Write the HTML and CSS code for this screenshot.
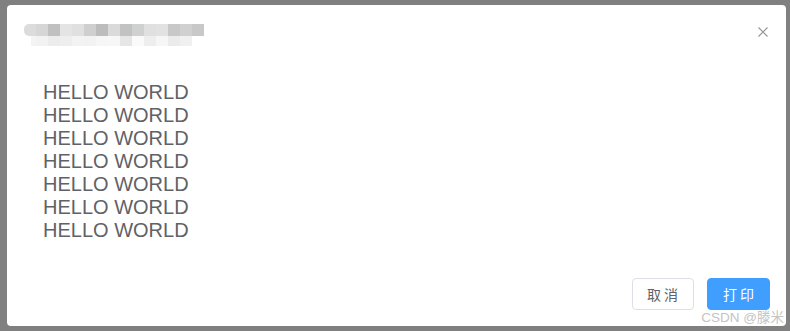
FILE: index.html
```html
<!DOCTYPE html>
<html lang="zh">
<head>
<meta charset="utf-8">
<title>Print dialog</title>
<link rel="stylesheet" href="styles.css">
</head>
<body>
<div class="overlay">
  <div class="dialog">
    <div class="dialog-header">
      <div class="title-blur" aria-label="title">
        <div class="row row-top">
          <span></span><span></span><span></span><span></span><span></span><span></span><span></span><span></span><span></span><span></span><span></span><span></span><span></span><span></span><span></span>
        </div>
        <div class="row row-bottom">
          <span></span><span></span><span></span><span></span><span></span><span></span><span></span><span></span><span></span><span></span><span></span><span></span><span></span><span></span>
        </div>
      </div>
      <button class="close" aria-label="close">
        <svg width="10" height="10" viewBox="0 0 10 10"><path d="M0.5 0.5 L9.5 9.5 M9.5 0.5 L0.5 9.5" stroke="#909399" stroke-width="1.1" fill="none"/></svg>
      </button>
    </div>
    <div class="dialog-body">
      <div class="line">HELLO WORLD</div>
      <div class="line">HELLO WORLD</div>
      <div class="line">HELLO WORLD</div>
      <div class="line">HELLO WORLD</div>
      <div class="line">HELLO WORLD</div>
      <div class="line">HELLO WORLD</div>
      <div class="line">HELLO WORLD</div>
    </div>
    <div class="dialog-footer">
      <button class="btn btn-default">取消</button>
      <button class="btn btn-primary">打印</button>
    </div>
  </div>
</div>
<div class="watermark">CSDN @滕米</div>
</body>
</html>
```

FILE: styles.css
```css
html, body {
  margin: 0;
  padding: 0;
}
body {
  width: 790px;
  height: 331px;
  overflow: hidden;
  background: #808080;
  font-family: "Liberation Sans", "Noto Sans CJK SC", sans-serif;
  position: relative;
}
.overlay {
  padding: 5px 4px 5px 7px;
  display: flex;
}
.dialog {
  width: 779px;
  height: 321px;
  background: #ffffff;
  border-radius: 4px;
  display: flex;
  flex-direction: column;
  box-sizing: border-box;
}
.dialog-header {
  display: flex;
  justify-content: space-between;
  align-items: flex-start;
  padding: 19px 18px 0 17px;
}
.title-blur {
  display: flex;
  flex-direction: column;
}
.row {
  display: flex;
}
.row span {
  width: 12px;
  display: block;
}
.row-top span { height: 12px; }
.row-bottom { padding-left: 7px; }
.row-bottom span { height: 10px; }
.row-top span:first-child { border-radius: 5px 0 0 5px; }
.row-top span:nth-child(1) { background: #dcdcdc; }
.row-top span:nth-child(2) { background: #d6d6d6; }
.row-top span:nth-child(3) { background: #c0c0c0; }
.row-top span:nth-child(4) { background: #e4e4e4; }
.row-top span:nth-child(5) { background: #e0e0e0; }
.row-top span:nth-child(6) { background: #cfcfcf; }
.row-top span:nth-child(7) { background: #bcbcbc; }
.row-top span:nth-child(8) { background: #dadada; }
.row-top span:nth-child(9) { background: #c2c2c2; }
.row-top span:nth-child(10) { background: #cfd0d0; }
.row-top span:nth-child(11) { background: #e0e0e0; }
.row-top span:nth-child(12) { background: #e2e2e2; }
.row-top span:nth-child(13) { background: #c8c8c8; }
.row-top span:nth-child(14) { background: #d0d0d0; }
.row-top span:nth-child(15) { background: #c8c8c8; }
.row-bottom span:nth-child(1) { background: #f4f4f4; width: 5px; }
.row-bottom span:nth-child(2) { background: #f2f2f2; }
.row-bottom span:nth-child(3) { background: #ececec; }
.row-bottom span:nth-child(4) { background: #eeeeee; }
.row-bottom span:nth-child(5) { background: #f3f3f3; }
.row-bottom span:nth-child(6) { background: #f2f2f2; }
.row-bottom span:nth-child(7) { background: #f6f6f6; }
.row-bottom span:nth-child(8) { background: #f7f7f7; }
.row-bottom span:nth-child(9) { background: #e6e6e6; }
.row-bottom span:nth-child(10) { background: #fafafa; }
.row-bottom span:nth-child(11) { background: #eeeeee; }
.row-bottom span:nth-child(12) { background: #f6f6f6; }
.row-bottom span:nth-child(13) { background: #ebebeb; }
.row-bottom span:nth-child(14) { background: #f0f0f0; }
.close {
  margin-top: 3px;
  padding: 0;
  border: 0;
  background: transparent;
  width: 10px;
  height: 10px;
  display: block;
  cursor: pointer;
}
.close svg { display: block; }
.dialog-body {
  padding: 35px 36px 0 36px;
  color: #606266;
  font-size: 20px;
  line-height: 23px;
}
.dialog-footer {
  margin-top: auto;
  display: flex;
  justify-content: flex-end;
  gap: 13px;
  padding: 0 16px 16px 16px;
}
.btn {
  height: 32px;
  box-sizing: border-box;
  border-radius: 4px;
  font-family: "Noto Sans CJK SC", "Liberation Sans", sans-serif;
  font-size: 14px;
  line-height: 1;
  letter-spacing: 3px;
  border: 1px solid #dcdfe6;
  cursor: pointer;
}
.btn-default {
  background: #ffffff;
  color: #606266;
  padding: 0 12px 0 14px;
}
.btn-primary {
  background: #409eff;
  border-color: #409eff;
  color: #ffffff;
  padding: 0 12px 0 15px;
}
.watermark {
  position: absolute;
  right: 6px;
  bottom: 5px;
  font-family: "Liberation Sans", "Noto Sans CJK SC", sans-serif;
  font-size: 13.5px;
  line-height: 16px;
  color: #c4c4c4;
}
```
